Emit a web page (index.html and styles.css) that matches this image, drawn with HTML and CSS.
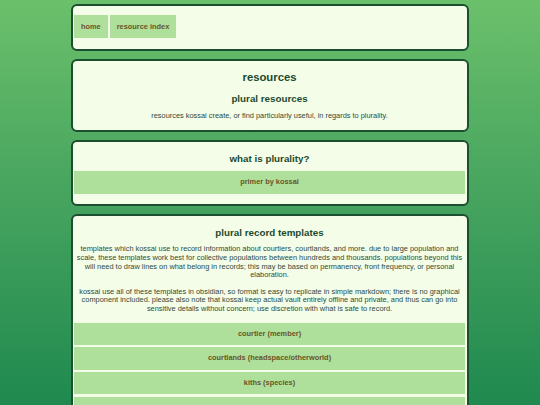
FILE: index.html
```html
<!DOCTYPE html>
<html lang="en">
<head>
<meta charset="utf-8">
<title>resources</title>
<link rel="stylesheet" href="styles.css">
</head>
<body>
<main class="page">
  <nav class="card nav-card">
    <a class="btn" href="#">home</a>
    <a class="btn" href="#">resource index</a>
  </nav>

  <section class="card intro">
    <h1 class="title">resources</h1>
    <h2 class="subtitle">plural resources</h2>
    <p class="text">resources kossai create, or find particularly useful, in regards to plurality.</p>
  </section>

  <section class="card">
    <h2 class="section-title">what is plurality?</h2>
    <div class="bars">
      <a class="bar" href="#">primer by kossai</a>
    </div>
  </section>

  <section class="card">
    <h2 class="section-title">plural record templates</h2>
    <p class="text">templates which kossai use to record information about courtiers, courtlands, and more. due to large population and scale, these templates work best for collective populations between hundreds and thousands. populations beyond this will need to draw lines on what belong in records; this may be based on permanency, front frequency, or personal elaboration.</p>
    <p class="text">kossai use all of these templates in obsidian, so format is easy to replicate in simple markdown; there is no graphical component included. please also note that kossai keep actual vault entirely offline and private, and thus can go into sensitive details without concern; use discretion with what is safe to record.</p>
    <div class="bars">
      <a class="bar" href="#">courtier (member)</a>
      <a class="bar" href="#">courtlands (headspace/otherworld)</a>
      <a class="bar" href="#">kiths (species)</a>
      <a class="bar" href="#">worldbuilding (lore/history)</a>
      <a class="bar" href="#">relationships (connections)</a>
    </div>
  </section>
</main>
</body>
</html>
```

FILE: styles.css
```css
html {
  min-height: 100%;
  background: linear-gradient(to bottom, #6bc06b 0%, #45a35e 50%, #1f894f 100%);
  background-attachment: fixed;
}

body {
  margin: 0;
  font-family: "Liberation Sans", Arial, sans-serif;
  font-size: 7.4px;
  color: #2f4a3a;
}

.page {
  width: 398px;
  margin: 4px auto 0;
  display: flex;
  flex-direction: column;
  gap: 8px;
}

.card {
  background: #f3fde8;
  border: 2px solid #1c4e30;
  border-radius: 6px;
  padding: 0 2px 0 1px;
  text-align: center;
}

.nav-card {
  display: flex;
  gap: 2px;
  padding: 9px 2px 11px 1px;
}

.btn {
  display: block;
  background: #aee09c;
  color: #6a5526;
  font-weight: bold;
  text-decoration: none;
  height: 23px;
  line-height: 23px;
  padding: 0 7px;
}

.title {
  margin: 9.5px 0 0;
  font-size: 11.3px;
  line-height: 13px;
  color: #1d4a2e;
}

.subtitle {
  margin: 9px 0 0;
  font-size: 9.8px;
  line-height: 11.3px;
  color: #1d4a2e;
}

.section-title {
  margin: 11px 0 7.4px;
  font-size: 9.8px;
  line-height: 11.3px;
  color: #1d4a2e;
}

.text {
  margin: 0 1px 8px;
  line-height: 8.6px;
}

.intro .text {
  margin-top: 8.7px;
  margin-bottom: 8.7px;
}

.bars {
  display: flex;
  flex-direction: column;
  gap: 2.5px;
  margin-top: 9px;
  margin-bottom: 10px;
}

.section-title + .bars {
  margin-top: 0;
}

.bar {
  display: block;
  background: #aee09c;
  color: #6a5526;
  font-weight: bold;
  text-decoration: none;
  height: 22.3px;
  line-height: 22.3px;
}
```
